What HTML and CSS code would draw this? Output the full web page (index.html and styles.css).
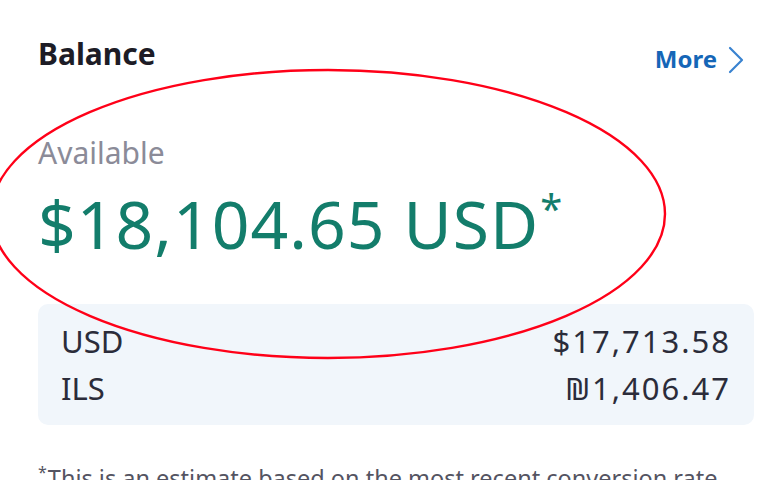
FILE: index.html
```html
<!DOCTYPE html>
<html lang="en">
<head>
<meta charset="utf-8">
<title>Balance</title>
<link rel="stylesheet" href="styles.css">
</head>
<body>
<main class="card">
  <header class="card-header">
    <h2 class="title">Balance</h2>
    <a class="more" href="#">More
      <svg class="chev" width="18" height="28" viewBox="0 0 18 28" aria-hidden="true"><path d="M3 2 L15 14 L3 26" fill="none" stroke="currentColor" stroke-width="2.2" stroke-linecap="round" stroke-linejoin="round"/></svg>
    </a>
  </header>
  <p class="label">Available</p>
  <p class="amount">$18,104.65 USD<span class="star">*</span></p>
  <div class="currencies">
    <div class="row"><span>USD</span><span class="value">$17,713.58</span></div>
    <div class="row"><span>ILS</span><span class="value">₪1,406.47</span></div>
  </div>
  <p class="note"><span class="note-star">*</span>This is an estimate based on the most recent conversion rate.</p>
</main>
<svg class="annotation" width="768" height="480" viewBox="0 0 768 480" aria-hidden="true">
  <ellipse cx="328" cy="214" rx="337" ry="144" fill="none" stroke="#ff0018" stroke-width="2.4"/>
</svg>
</body>
</html>
```
FILE: styles.css
```css
html, body {
  margin: 0;
  padding: 0;
  background: #ffffff;
  font-family: "Noto Sans", "Open Sans", sans-serif;
  overflow: hidden;
}

.card {
  width: 768px;
  height: 480px;
  box-sizing: border-box;
  padding: 33px 14px 0 38px;
}

.card-header {
  display: flex;
  justify-content: space-between;
  align-items: flex-start;
}

.title {
  margin: 0;
  font-size: 30px;
  font-weight: 700;
  line-height: normal;
  color: #1d1c26;
}

.more {
  display: flex;
  align-items: center;
  gap: 10px;
  margin-top: 9px;
  margin-right: 9px;
  font-size: 24px;
  font-weight: 700;
  color: #1566b7;
  text-decoration: none;
  line-height: normal;
}

.chev {
  color: #3a83d0;
  margin-top: 2px;
}

.label {
  margin: 57px 0 0;
  font-size: 30px;
  line-height: normal;
  color: #8b8b98;
}

.amount {
  margin: 5px 0 0;
  font-size: 66px;
  letter-spacing: 1px;
  line-height: normal;
  color: #137d6b;
}

.star {
  font-size: 40px;
  vertical-align: 26px;
  line-height: 0;
  margin-left: 1px;
}

.currencies {
  margin-top: 36px;
  background: #f1f6fb;
  border-radius: 10px;
  padding: 14px 23px 13px 23px;
  color: #2b2c3a;
  font-size: 31px;
  line-height: 47px;
}

.row {
  display: flex;
  justify-content: space-between;
}

.value {
  letter-spacing: 2px;
}

.note {
  margin: 38px 0 0;
  font-size: 23.5px;
  line-height: 30px;
  color: #545462;
  white-space: nowrap;
}

.note-star {
  font-size: 16px;
  vertical-align: 9px;
  line-height: 0;
  margin-right: 1px;
}

.annotation {
  position: absolute;
  left: 0;
  top: 0;
  pointer-events: none;
}
```
